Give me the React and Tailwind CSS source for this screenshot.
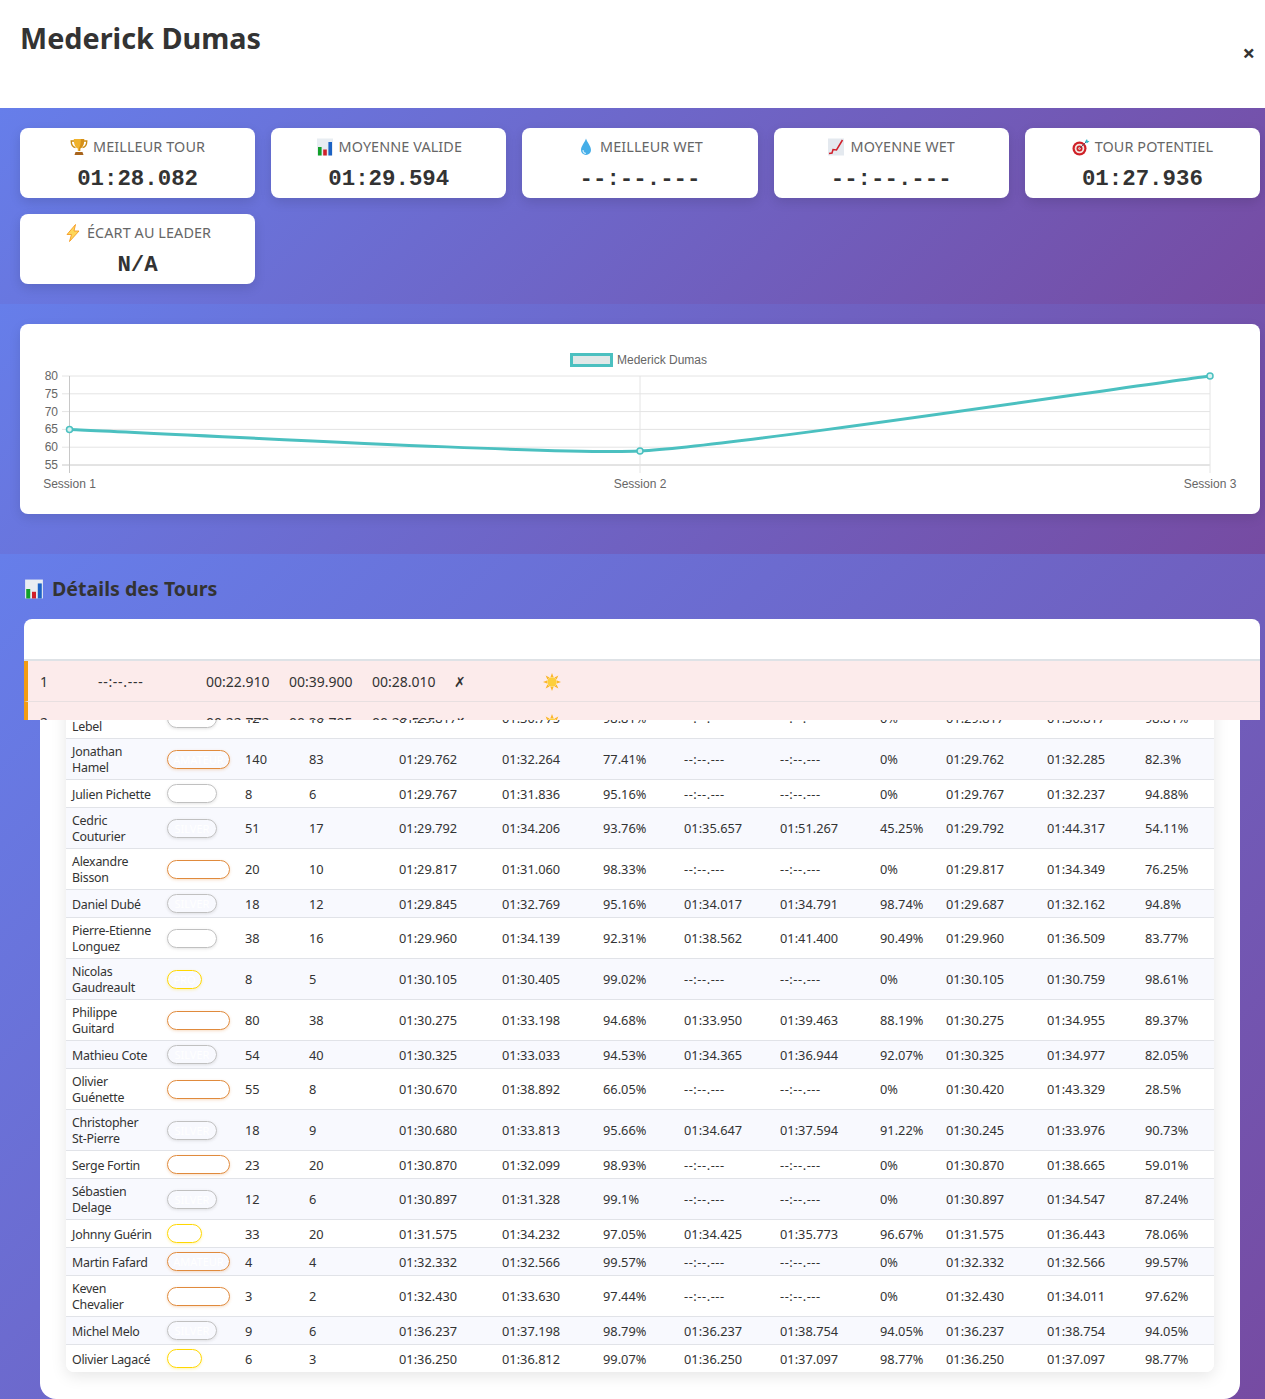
import React from 'react';

const GRADIENT = 'bg-[linear-gradient(135deg,#667eea_0%,#764ba2_100%)]';
const NO_TIME = '--:--.---';

// Emoji-like icons
const Trophy = ({ className }) => (
  <svg viewBox="0 0 18 18" className={className}>
    <path d="M4 3H1.2c0 4 1.4 6 4.3 6.6M14 3h2.8c0 4-1.4 6-4.3 6.6" fill="none" stroke="#c98a12" strokeWidth="1.3" />
    <path d="M3.8 1h10.4c0 5.5-1.6 8.6-4 9.6v2.4H7.8v-2.4C5.4 9.6 3.8 6.5 3.8 1z" fill="#f0b22c" />
    <path d="M10.8 1h3.4c0 5.5-1.6 8.6-4 9.6v2.4H9V10c1.4-1.5 1.8-5 1.8-9z" fill="#d58f18" />
    <path d="M5.5 14h7l1 3h-9z" fill="#a8641c" />
  </svg>
);

const BarsIcon = ({ className }) => (
  <svg viewBox="0 0 18 18" className={className}>
    <rect x="1" y="0.5" width="16" height="17" fill="#e8edf2" />
    <rect x="2" y="9" width="3.6" height="8.5" fill="#12a02a" />
    <rect x="7.2" y="11.5" width="3.6" height="6" fill="#d0202a" />
    <rect x="12.4" y="4" width="3.6" height="13.5" fill="#1c62c4" />
  </svg>
);

const Drop = ({ className }) => (
  <svg viewBox="0 0 18 18" className={className}>
    <path d="M9 0.5C10.2 4.5 14 8 14 12a5 5 0 0 1-10 0c0-4 3.800-7.500 5-11.500z" fill="#45aee8" />
    <path d="M6 12c0 2 1.200 3.300 3 3.500" fill="none" stroke="#c6e8fb" strokeWidth="1.200" />
  </svg>
);

const TrendIcon = ({ className }) => (
  <svg viewBox="0 0 18 18" className={className}>
    <rect x="1" y="0.5" width="16" height="17" fill="#e4e9ef" />
    <path d="M2 15.500l3-.5 1-3.500 3.500.5L15.500 2" fill="none" stroke="#d11f2a" strokeWidth="1.500" />
  </svg>
);

const Target = ({ className }) => (
  <svg viewBox="0 0 18 18" className={className}>
    <circle cx="7.500" cy="10.500" r="7" fill="#cf2027" />
    <circle cx="7.500" cy="10.500" r="4.800" fill="#f4e6e0" />
    <circle cx="7.500" cy="10.500" r="3" fill="#cf2027" />
    <circle cx="7.500" cy="10.500" r="1.200" fill="#f4e6e0" />
    <path d="M7.500 10.500L14 4" stroke="#556" strokeWidth="0.900" />
    <path d="M13 3.500l2-2.500.5 1.800 2 .4-2.500 2.100z" fill="#37b6c4" />
  </svg>
);

const Bolt = ({ className }) => (
  <svg viewBox="0 0 18 18" className={className}>
    <path d="M11.500 0.500L3 10.500h4.500L5.500 17.500 15 7H10z" fill="#fdd75a" stroke="#f59a23" strokeWidth="0.900" />
  </svg>
);

const Sun = ({ className }) => (
  <svg viewBox="0 0 18 18" className={className}>
    <g fill="#fbb62c">
      <path d="M9 0l1.500 4h-3zM9 18l-1.500-4h3zM0 9l4-1.500v3zM18 9l-4 1.500v-3zM2.600 2.600l3.900 1.800-2.100 2.100zM15.400 15.400l-3.900-1.800 2.100-2.100zM15.400 2.600l-1.800 3.900-2.100-2.100zM2.600 15.400l1.800-3.900 2.100 2.100z" />
    </g>
    <circle cx="9" cy="9" r="4.800" fill="#fdcf3c" />
  </svg>
);

const STATS = [
  { icon: Trophy, label: 'Meilleur tour', value: '01:28.082' },
  { icon: BarsIcon, label: 'Moyenne valide', value: '01:29.594' },
  { icon: Drop, label: 'Meilleur wet', value: '--:--.---' },
  { icon: TrendIcon, label: 'Moyenne wet', value: '--:--.---' },
  { icon: Target, label: 'Tour potentiel', value: '01:27.936' },
  { icon: Bolt, label: 'Écart au leader', value: 'N/A' },
];

const LAPS = [
  ['1', NO_TIME, '00:22.910', '00:39.900', '00:28.010', '✗'],
  ['2', NO_TIME, '00:22.772', '00:39.795', '00:28.525', '✗'],
];

const TIERS = {
  A: { label: 'AMATEUR', cls: 'w-[63px] border-[#e08a3c] shadow-[0_1px_3px_rgba(224,138,60,0.3)]' },
  S: { label: 'SILVER', cls: 'w-[50px] border-[#c0c0c0] shadow-[0_1px_3px_rgba(160,160,160,0.3)]' },
  P: { label: 'PRO', cls: 'w-[35px] border-[#ffd700] shadow-[0_1px_3px_rgba(255,215,0,0.3)]' },
};

// "|" marks where the name wraps
const DRIVERS = [
  ['\u00a0|Lebel', 'S', '12', '16', '01:29.817', '01:30.775', '98.81%', NO_TIME, NO_TIME, '0%', '01:29.817', '01:30.817', '98.81%'],
  ['Jonathan|Hamel', 'A', '140', '83', '01:29.762', '01:32.264', '77.41%', NO_TIME, NO_TIME, '0%', '01:29.762', '01:32.285', '82.3%'],
  ['Julien Pichette', 'S', '8', '6', '01:29.767', '01:31.836', '95.16%', NO_TIME, NO_TIME, '0%', '01:29.767', '01:32.237', '94.88%'],
  ['Cedric|Couturier', 'S', '51', '17', '01:29.792', '01:34.206', '93.76%', '01:35.657', '01:51.267', '45.25%', '01:29.792', '01:44.317', '54.11%'],
  ['Alexandre|Bisson', 'A', '20', '10', '01:29.817', '01:31.060', '98.33%', NO_TIME, NO_TIME, '0%', '01:29.817', '01:34.349', '76.25%'],
  ['Daniel Dubé', 'S', '18', '12', '01:29.845', '01:32.769', '95.16%', '01:34.017', '01:34.791', '98.74%', '01:29.687', '01:32.162', '94.8%'],
  ['Pierre-Etienne|Longuez', 'S', '38', '16', '01:29.960', '01:34.139', '92.31%', '01:38.562', '01:41.400', '90.49%', '01:29.960', '01:36.509', '83.77%'],
  ['Nicolas|Gaudreault', 'P', '8', '5', '01:30.105', '01:30.405', '99.02%', NO_TIME, NO_TIME, '0%', '01:30.105', '01:30.759', '98.61%'],
  ['Philippe|Guitard', 'A', '80', '38', '01:30.275', '01:33.198', '94.68%', '01:33.950', '01:39.463', '88.19%', '01:30.275', '01:34.955', '89.37%'],
  ['Mathieu Cote', 'S', '54', '40', '01:30.325', '01:33.033', '94.53%', '01:34.365', '01:36.944', '92.07%', '01:30.325', '01:34.977', '82.05%'],
  ['Olivier|Guénette', 'A', '55', '8', '01:30.670', '01:38.892', '66.05%', NO_TIME, NO_TIME, '0%', '01:30.420', '01:43.329', '28.5%'],
  ['Christopher|St-Pierre', 'S', '18', '9', '01:30.680', '01:33.813', '95.66%', '01:34.647', '01:37.594', '91.22%', '01:30.245', '01:33.976', '90.73%'],
  ['Serge Fortin', 'A', '23', '20', '01:30.870', '01:32.099', '98.93%', NO_TIME, NO_TIME, '0%', '01:30.870', '01:38.665', '59.01%'],
  ['Sébastien|Delage', 'S', '12', '6', '01:30.897', '01:31.328', '99.1%', NO_TIME, NO_TIME, '0%', '01:30.897', '01:34.547', '87.24%'],
  ['Johnny Guérin', 'P', '33', '20', '01:31.575', '01:34.232', '97.05%', '01:34.425', '01:35.773', '96.67%', '01:31.575', '01:36.443', '78.06%'],
  ['Martin Fafard', 'A', '4', '4', '01:32.332', '01:32.566', '99.57%', NO_TIME, NO_TIME, '0%', '01:32.332', '01:32.566', '99.57%'],
  ['Keven|Chevalier', 'A', '3', '2', '01:32.430', '01:33.630', '97.44%', NO_TIME, NO_TIME, '0%', '01:32.430', '01:34.011', '97.62%'],
  ['Michel Melo', 'S', '9', '6', '01:36.237', '01:37.198', '98.79%', '01:36.237', '01:38.754', '94.05%', '01:36.237', '01:38.754', '94.05%'],
  ['Olivier Lagacé', 'P', '6', '3', '01:36.250', '01:36.812', '99.07%', '01:36.250', '01:37.097', '98.77%', '01:36.250', '01:37.097', '98.77%'],
];

const DRIVER_COLS = [95, 78, 64, 90, 103, 101, 81, 96, 100, 66, 101, 98, 75];
const LAP_COLS = [62, 108, 83, 83, 82, 89, 729];

function StatCard({ icon: Icon, label, value }) {
  return (
    <div className="h-[70px] bg-white rounded-lg shadow-[0_4px_12px_rgba(0,0,0,0.12)] flex flex-col items-center pt-[9px]">
      <div className="flex items-center gap-[5px] h-5 text-[14.4px] uppercase text-[#666] tracking-[0.1px]">
        <Icon className="w-[18px] h-[18px]" />
        <span>{label}</span>
      </div>
      <div className="mt-[10px] font-['Liberation_Mono',monospace] font-bold text-[22.4px] leading-6 text-[#333]">
        {value}
      </div>
    </div>
  );
}

function ProgressChart() {
  const gridY = [376, 393.8, 411.6, 429.4, 447.2, 465];
  const ticks = ['80', '75', '70', '65', '60', '55'];
  const gridX = [69.5, 640, 1210];
  const dots = [[69.5, 429.4], [640, 451], [1210, 376]];
  return (
    <svg width="1240" height="190" viewBox="20 324 1240 190" className="block font-['Liberation_Sans',sans-serif]">
      <rect x="571.500" y="354.500" width="40" height="11" fill="#e0e8e8" stroke="#4bc0c0" strokeWidth="3" />
      <text x="617" y="364" fontSize="12" fill="#666">Mederick Dumas</text>
      {gridY.map((y, i) => (
        <g key={y}>
          <line x1="62" x2="1210" y1={y} y2={y} stroke={i === 5 ? '#c8c8c8' : '#e4e4e4'} />
          <text x="58" y={y + 4} fontSize="12" fill="#666" textAnchor="end">{ticks[i]}</text>
        </g>
      ))}
      {gridX.map((x, i) => (
        <g key={x}>
          <line x1={x} x2={x} y1="376" y2="473" stroke={i === 0 ? '#c8c8c8' : '#e4e4e4'} />
          <text x={x} y="488" fontSize="12" fill="#666" textAnchor="middle">Session {i + 1}</text>
        </g>
      ))}
      <path d="M69.500 429.400C155 432.600 554 455 640 451C726 447 1124 387 1210 376" fill="none" stroke="#4bc0c0" strokeWidth="3" />
      {dots.map(([x, y]) => (
        <circle key={x} cx={x} cy={y} r="3" fill="#d8f3f1" stroke="#4bc0c0" strokeWidth="1.500" />
      ))}
    </svg>
  );
}

function LapsTable() {
  return (
    <div className="ml-6 w-[1236px] h-[101px] overflow-hidden bg-white rounded-t-lg">
      <table className="w-full table-fixed border-separate border-spacing-0 text-sm text-[#333]">
        <colgroup>
          {LAP_COLS.map((w, i) => <col key={i} style={{ width: w }} />)}
        </colgroup>
        <thead>
          <tr>
            <th colSpan={7} className="h-[42px] border-b-2 border-[#dee2e6]"></th>
          </tr>
        </thead>
        <tbody>
          {LAPS.map((lap) => (
            <tr key={lap[0]} className="bg-[#fcebeb]">
              {lap.map((cell, i) => (
                <td
                  key={i}
                  className={`h-[41px] border-b border-[#e8dfe0] px-3 pt-[2px] ${i === 0 ? 'border-l-4 border-l-[#f39c12]' : ''} ${cell === NO_TIME ? 'tracking-[0.7px]' : ''}`}
                >
                  {cell}
                </td>
              ))}
              <td className="h-[41px] border-b border-[#e8dfe0] px-3 pt-[2px]">
                <Sun className="w-[18px] h-[18px]" />
              </td>
            </tr>
          ))}
        </tbody>
      </table>
    </div>
  );
}

function DriversTable() {
  return (
    <div className="-mt-[22px] rounded-b-lg overflow-hidden bg-white shadow-[0_4px_16px_rgba(0,0,0,0.1)]">
      <table className="w-full table-fixed border-separate border-spacing-0 text-[12.8px] leading-4 text-[#333]">
        <colgroup>
          {DRIVER_COLS.map((w, i) => <col key={i} style={{ width: w }} />)}
        </colgroup>
        <tbody>
          {DRIVERS.map((row, r) => {
            const [name, tier, ...rest] = row;
            const t = TIERS[tier];
            const cellCls = `px-[6px] py-1 align-middle ${r === DRIVERS.length - 1 ? '' : 'border-b border-[#e1e3e8]'} ${r % 2 === 1 ? 'bg-[#f8f9fe]' : 'bg-white'}`;
            return (
              <tr key={r}>
                <td className={`${cellCls} text-[12.4px] tracking-[-0.25px] whitespace-nowrap`}>
                  {name.split('|').map((line) => <div key={line} className="translate-y-px">{line}</div>)}
                </td>
                <td className={cellCls}>
                  <span className={`block h-[19px] rounded-xl border text-center text-[11px] leading-[17px] text-white ${t.cls}`}>
                    {t.label}
                  </span>
                </td>
                {rest.map((cell, i) => (
                  <td key={i} className={`${cellCls} ${cell === NO_TIME ? 'tracking-[0.55px]' : ''}`}>{cell}</td>
                ))}
              </tr>
            );
          })}
        </tbody>
      </table>
    </div>
  );
}

export default function App() {
  return (
    <div className="w-[1265px] h-[1399px] overflow-hidden font-['Noto_Sans',sans-serif] text-[#333]">
      {/* Header */}
      <header className="h-[108px] bg-white flex justify-between pl-5 pr-[10px]">
        <h1 className="mt-[18px] text-[28.8px] leading-10 font-bold">Mederick Dumas</h1>
        <button className="mt-10 h-6 text-[22px] leading-6 font-bold">×</button>
      </header>

      {/* Stats */}
      <section className={`h-[196px] pt-5 pl-5 pr-[5px] ${GRADIENT}`}>
        <div className="grid grid-cols-5 gap-4">
          {STATS.map((s) => <StatCard key={s.label} {...s} />)}
        </div>
      </section>

      {/* Chart */}
      <section className={`h-[250px] pt-5 pl-5 pr-[5px] ${GRADIENT}`}>
        <div className="bg-white rounded-lg shadow-[0_4px_12px_rgba(0,0,0,0.1)] h-[190px]">
          <ProgressChart />
        </div>
      </section>

      {/* Details */}
      <section className={`h-[845px] pt-[22px] ${GRADIENT}`}>
        <h2 className="ml-6 flex items-center gap-2 h-[26px] text-[19.6px] font-bold text-[#333]">
          <BarsIcon className="w-5 h-5" />
          <span>Détails des Tours</span>
        </h2>
        <div className="h-[17px]"></div>
        <LapsTable />
        <div className="ml-10 w-[1200px] h-[679px] bg-white rounded-b-2xl overflow-hidden px-[26px]">
          <DriversTable />
        </div>
      </section>
    </div>
  );
}
